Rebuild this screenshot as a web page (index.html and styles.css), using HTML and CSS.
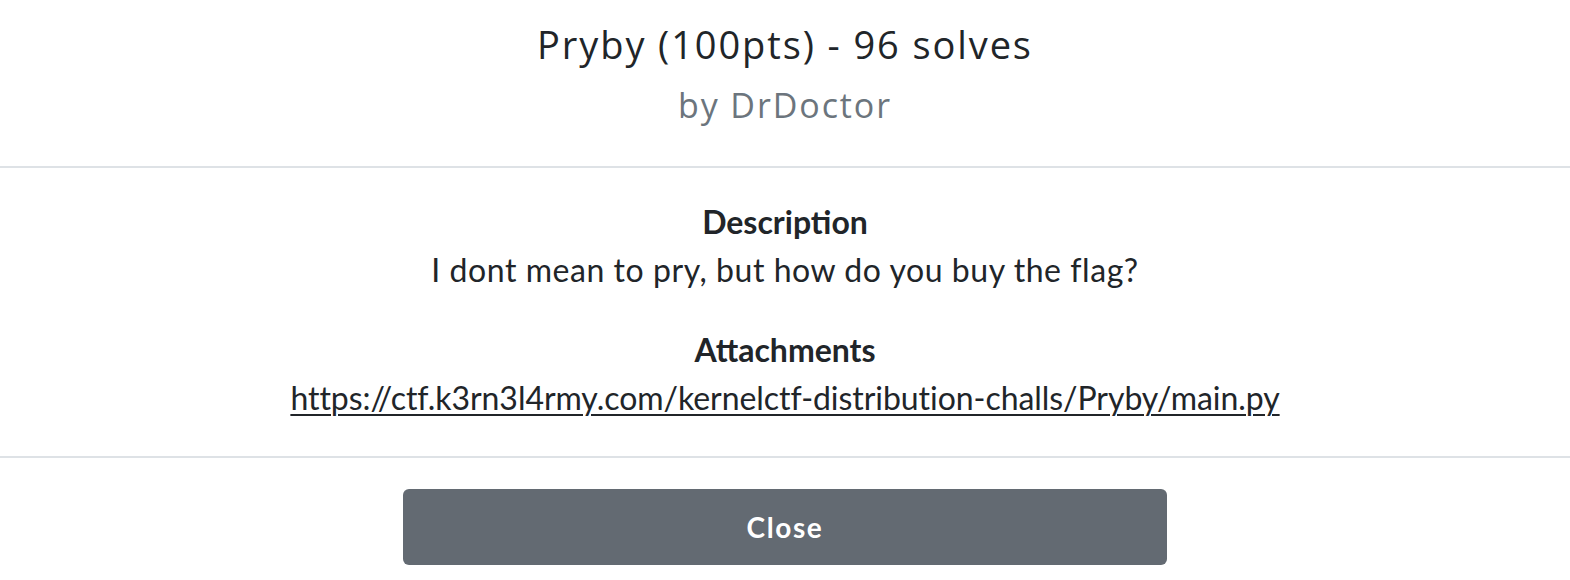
FILE: index.html
```html
<!DOCTYPE html>
<html>
<head>
<meta charset="utf-8">
<link rel="stylesheet" href="styles.css">
</head>
<body>
<div class="modal">
  <header class="modal-header">
    <h1 class="title">Pryby (100pts) - 96 solves</h1>
    <div class="author">by DrDoctor</div>
  </header>
  <section class="modal-body">
    <div class="block">
      <h2 class="label">Description</h2>
      <p class="text">I dont mean to pry, but how do you buy the flag?</p>
    </div>
    <div class="block">
      <h2 class="label">Attachments</h2>
      <a class="link" href="#">https://ctf.k3rn3l4rmy.com/kernelctf-distribution-challs/Pryby/main.py</a>
    </div>
  </section>
  <footer class="modal-footer">
    <button class="close-btn">Close</button>
  </footer>
</div>
</body>
</html>
```
FILE: styles.css
```css
html, body {
  margin: 0;
  padding: 0;
  background: #fff;
}
.modal {
  width: 1570px;
  display: flex;
  flex-direction: column;
}
.modal-header {
  text-align: center;
  padding: 20px 0 38px;
  border-bottom: 2px solid #dee2e6;
  font-family: "Open Sans", sans-serif;
}
.title {
  margin: 0;
  font-size: 38px;
  font-weight: 400;
  line-height: 48px;
  letter-spacing: 1.9px;
  color: #212529;
}
.author {
  font-size: 34px;
  line-height: 46px;
  margin-top: 14px;
  letter-spacing: 1.9px;
  color: #6c757d;
}
.modal-body {
  text-align: center;
  padding: 30px 0 34px;
  border-bottom: 2px solid #dee2e6;
  font-family: "Lato", sans-serif;
  color: #212529;
  display: flex;
  flex-direction: column;
  gap: 32px;
}
.block {
  display: flex;
  flex-direction: column;
  align-items: center;
}
.label {
  margin: 0;
  font-size: 32px;
  font-weight: 700;
  line-height: 48px;
}
.text {
  margin: 0;
  font-size: 32px;
  line-height: 48px;
  letter-spacing: 0.55px;
}
.link {
  font-size: 32px;
  line-height: 48px;
  letter-spacing: -0.05px;
  color: #212529;
  text-decoration: underline;
  text-underline-offset: 4px;
  text-decoration-thickness: 2px;
}
.modal-footer {
  display: flex;
  justify-content: center;
  padding-top: 31px;
}
.close-btn {
  width: 764px;
  height: 76px;
  background: #636a72;
  color: #fff;
  border: none;
  border-radius: 6px;
  font-family: "Lato", sans-serif;
  font-size: 28px;
  font-weight: 700;
  letter-spacing: 1.6px;
}
```
